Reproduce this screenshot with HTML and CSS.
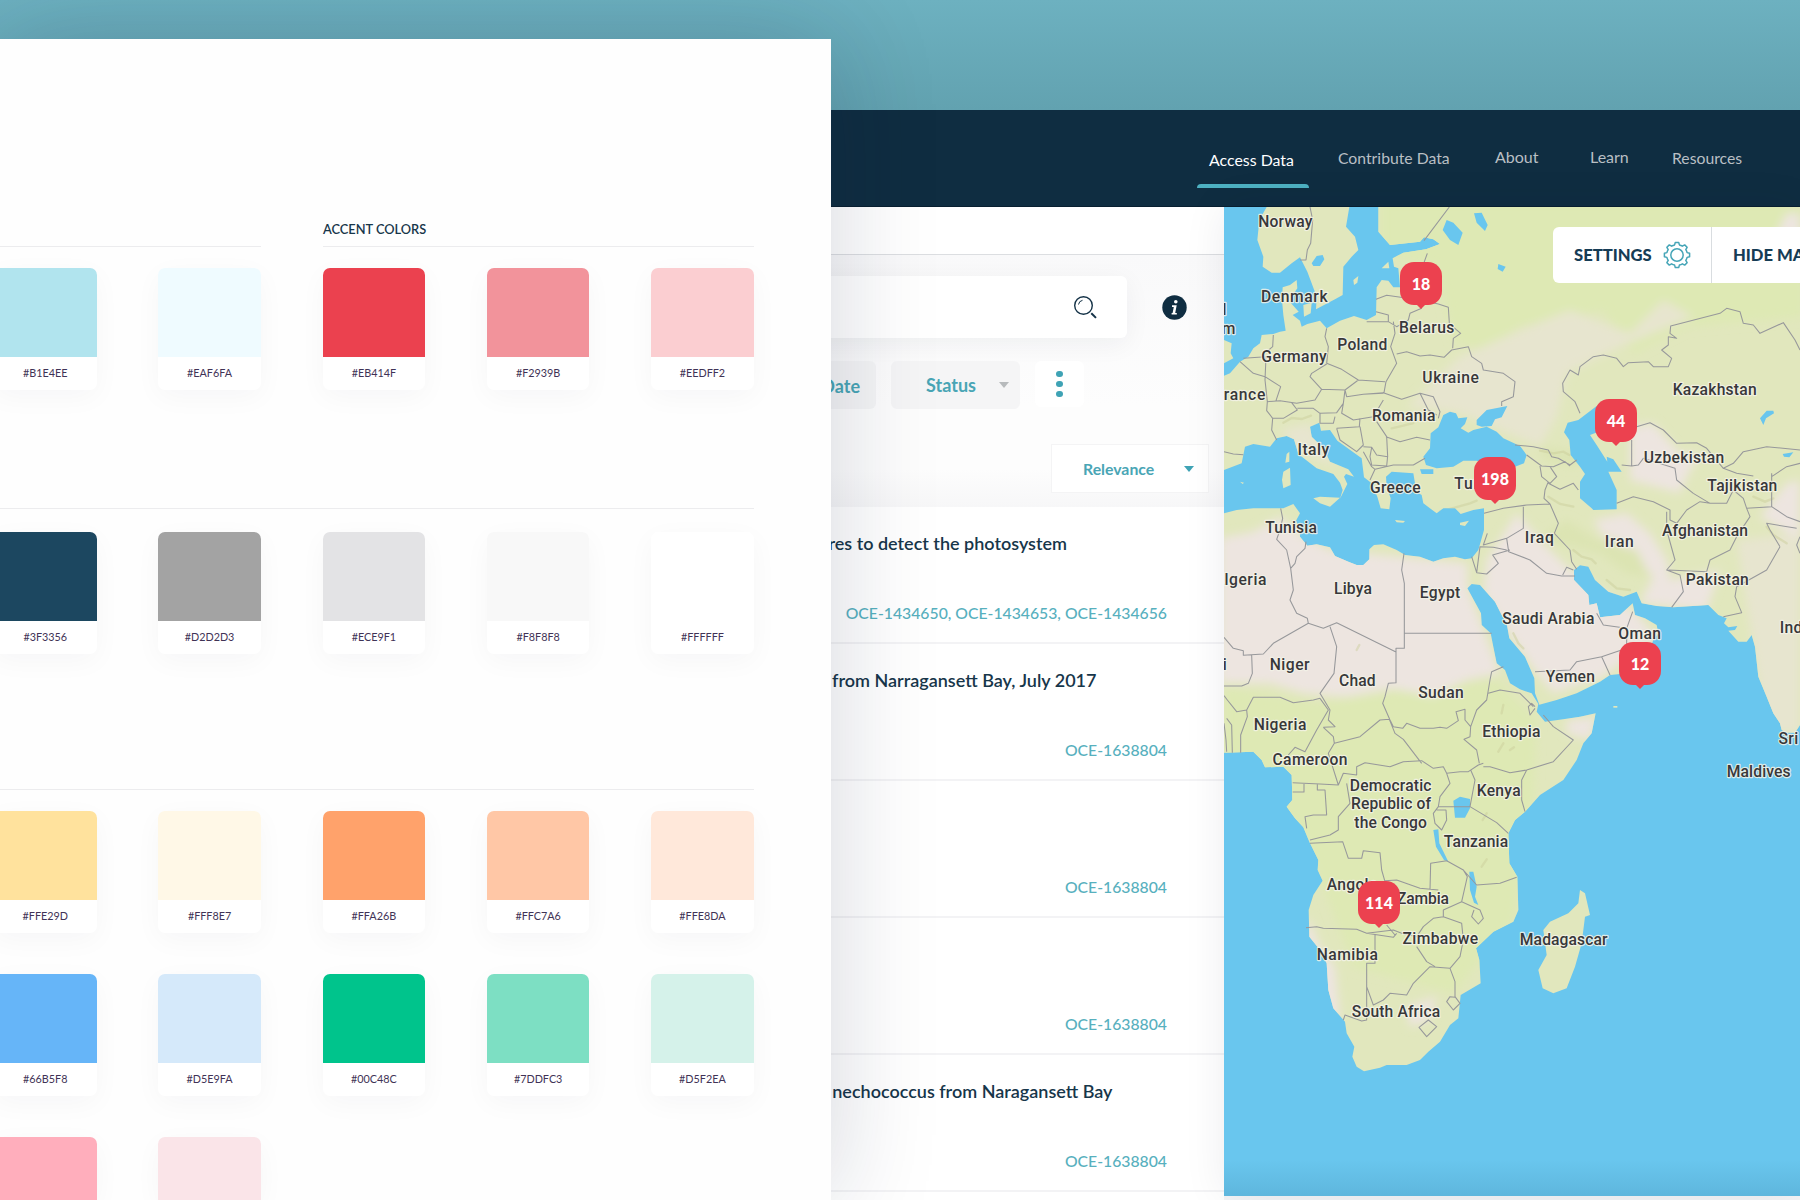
FILE: index.html
```html
<!DOCTYPE html>
<html lang="en">
<head>
<meta charset="utf-8">
<title>Access Data</title>
<link rel="stylesheet" href="styles.css">
</head>
<body>
<div class="app">
  <header class="topbar">
    <nav class="nav">
      <a class="nav-item active">Access Data</a>
      <a class="nav-item contribute">Contribute Data</a>
      <a class="nav-item about">About</a>
      <a class="nav-item learn">Learn</a>
      <a class="nav-item resources">Resources</a>
    </nav>
  </header>
  <main class="content">
    <section class="results">
      <div class="strip"></div>
      <div class="filters">
        <div class="search-row">
          <div class="search">
            <svg width="25" height="25" viewBox="0 0 25 25" fill="none" stroke="#143247"><circle cx="10.5" cy="10.5" r="8.8" stroke-width="1.4"/><path d="M5.5 9.5a5 5 0 0 1 4-4.2" stroke-width="1"/><path d="M18.3 18.3l4.7 4.6" stroke-width="2"/></svg>
          </div>
          <svg class="info" width="25" height="25" viewBox="0 0 25 25"><circle cx="12.5" cy="12.5" r="12.2" fill="#0f2d41"/><circle cx="13.8" cy="6.8" r="1.8" fill="#fff"/><path d="M10 10.3h4.7l-1.5 7.7h1.6v1.6H9.6V18h1l1.2-6.1H10z" fill="#fff"/></svg>
        </div>
        <div class="chips">
          <div class="chip date">Date</div>
          <div class="chip status">Status<i class="caret"></i></div>
          <div class="more"><i></i><i></i><i></i></div>
        </div>
        <div class="sort">Relevance<i class="caret"></i></div>
      </div>
      <ul class="list">
        <li><h3 class="t1">res to detect the photosystem</h3><p>OCE-1434650, OCE-1434653, OCE-1434656</p></li>
        <li><h3 class="t2">from Narragansett Bay, July 2017</h3><p>OCE-1638804</p></li>
        <li><h3></h3><p>OCE-1638804</p></li>
        <li><h3></h3><p>OCE-1638804</p></li>
        <li><h3 class="t3">nechococcus from Naragansett Bay</h3><p>OCE-1638804</p></li>
      </ul>
    </section>
    <section class="map">
      <svg class="map-art" viewBox="12 21 1728 2967" preserveAspectRatio="none">
        <defs>
          <path id="land" d="M475 21V95L510 135L600 125L612 112L640 118L660 132L618 148L550 158L518 175L522 200L535 205L540 262L520 262L505 242L485 240L470 262L468 345L440 360L402 348L360 362L320 385L300 362L262 372L245 380L240 362L218 345L236 335L212 308L218 285L232 265L230 240L210 255L188 262L186 300L190 345L197 392L180 395L160 402L125 405L120 430L100 445L85 470L60 485L30 520L12 527V810L65 790L75 740L100 732L150 740L170 715L200 708L222 718L235 762L290 805L340 822L360 848L368 870L360 896L382 852L372 830L378 822L402 830L385 808L330 785L310 745L275 710L270 680L298 668L303 692L330 690L352 722L425 775L432 832L455 850L472 890L482 925L508 928L512 895L500 860L498 830L515 815L580 820L585 850L580 870L605 885L610 910L650 940L670 925L705 925L722 942L760 930L792 925L792 990L775 1050L755 1075L735 1078L705 1070L670 1075L640 1085L600 1070L555 1065L530 1050L490 1033L462 1035L448 1048L448 1078L430 1095L410 1095L385 1085L345 1068L330 1042L290 1033L262 1037L240 1010L238 985L228 962L240 940L220 912L190 925L100 925L50 930L12 940V1658L100 1655L125 1680L135 1702L190 1700L215 1725L217 1800L200 1820L225 1855L250 1882L268 1925L295 1980L293 2010L308 2042L280 2085L266 2130L268 2210L300 2250L320 2290L325 2370L340 2425L375 2465L380 2500L403 2540L397 2570L410 2600L432 2614L480 2603L500 2595L560 2595L600 2580L625 2555L660 2525L690 2475L715 2455L722 2385L782 2350L778 2280L768 2245L820 2195L880 2165L895 2130L892 2030L868 1990L865 1900L885 1860L915 1835L960 1785L1030 1740L1070 1680L1090 1630L1115 1600L1127 1540L1080 1550L1040 1556L975 1565L950 1535L955 1512L935 1480L900 1468L870 1450L855 1410L830 1390L820 1340L812 1300L785 1275L783 1240L742 1165L755 1152L780 1155L825 1205L845 1245L860 1270L868 1315L915 1370L943 1435L945 1480L958 1514L1010 1500L1070 1480L1140 1445L1170 1425L1200 1422L1280 1370L1300 1320L1315 1300L1310 1275L1275 1255L1245 1245L1238 1210L1200 1245L1140 1252L1130 1210L1108 1215L1105 1185L1062 1140V1110L1080 1096L1105 1100L1125 1140L1165 1175L1210 1190L1250 1175L1265 1210L1310 1218L1360 1222L1465 1215L1495 1245L1520 1255L1512 1270L1525 1282L1552 1278L1545 1290L1525 1292L1555 1325L1580 1325L1595 1305L1605 1340L1615 1430L1640 1490L1660 1540L1680 1570L1685 1590L1700 1598L1725 1598L1740 1575V21Z"/>
          <clipPath id="land-clip"><use href="#land"/></clipPath>
          <filter id="soft" x="-20%" y="-20%" width="140%" height="140%"><feGaussianBlur stdDeviation="14"/></filter>
        </defs>
        <rect x="12" y="21" width="1728" height="2967" fill="#69c6ee"/>
        <g fill="#e1e7bd">
          <path d="M140 21L118 60L112 120L130 170L128 200L155 218L180 218L215 190L240 172L262 215L275 250L290 290L288 328L345 298L368 285L370 200L395 170L415 150L405 110L378 80L388 21Z"/>
          <path d="M250 315L275 308L272 340L252 350ZM400 240L415 228L412 248L402 255ZM485 205L505 185L508 205ZM200 762L208 755L208 785L196 788ZM190 815L210 803L212 855L190 865L186 840ZM280 895L300 890L360 893L330 920L300 910ZM525 960L555 963L550 968L530 967ZM720 968L747 962L735 978L720 975ZM12 420L35 430L32 460L40 475L12 490ZM60 845L72 848L68 852Z"/>
          <path d="M1080 2070L1095 2080L1110 2145L1095 2150L1085 2230L1065 2300L1040 2365L1000 2380L968 2365L955 2310L980 2265L970 2190L990 2165L1045 2140L1075 2110Z"/>
          <path d="M1180 1518h12v5h-12z"/>
        </g>
        <use href="#land" fill="#e1e7bd"/>
        <g clip-path="url(#land-clip)">
          <g filter="url(#soft)">
            <path fill="#dee9b4" d="M480 0H1750V350L1400 380L1240 460L1150 330L900 380L800 460L700 420L650 200L480 160ZM12 1460L300 1510L500 1480L830 1440L950 1560L940 1800L880 2160L700 2380L400 2300L250 1900L12 1700Z"/>
            <path fill="#e7e5cf" d="M720 470L900 390L1050 330L1230 400L1330 300L1420 350L1200 440L1040 520L1010 650L960 740L720 640L560 620ZM180 690L270 670L350 800L240 760ZM1550 1020L1740 1000V1600H1640Z"/>
            <path fill="#ede5e0" d="M0 1015L100 995L180 950L235 1000L330 1050L742 1090L742 1160L840 1420L740 1440L640 1490L520 1465L380 1490L250 1480L150 1450L0 1450ZM800 1080L890 940L970 1030L1040 1100L1250 1240L1310 1310L1150 1430L1000 1480L950 1420L860 1290L790 1180ZM1120 960L1220 940L1290 1000L1340 1080L1350 1140L1500 1110L1460 1230L1260 1210L1300 1130L1190 1020L1150 1010ZM1230 680L1300 670L1380 760L1440 760L1400 830L1380 880L1230 840ZM1700 850L1740 840V1020L1620 950ZM1040 1560L1130 1550L1110 1620L1040 1600ZM265 2150L300 2240L345 2300L360 2460H320L250 2220ZM560 2420L650 2390L630 2460L570 2480ZM1700 40H1740V120H1660Z"/>
            <path fill="#dce4b2" d="M960 1020L1040 960L1130 1020L1250 1050L1290 1130L1220 1120L1140 1060L1060 1040ZM950 740L1100 760L1060 800L980 780Z"/>
          </g>
          <g fill="none" stroke="#c9cc98" stroke-width="7" stroke-opacity=".45" stroke-linecap="round">
            <path d="M190 668l25-14 30 3 28-10M960 752l40 8 30-5 18 10M985 890l35 22 40 8M1060 1050l25 20 30 8 12 12M1160 1140l30 25 40 5M850 1515l-5 25M850 1630l-15 25M870 1650l12-8M515 685l35-8 30-8M660 935l90-25 20-8M1600 890l35 15 25-10M1640 980l20 25 40 25M880 1300l15 30 15 15M785 2000l15-22M1045 2310l12-60M410 1350l8-15M800 1840l-12 20"/>
          </g>
        </g>
        <path fill="#69c6ee" d="M690 635L708 640L715 655L742 652L735 672L722 685L745 698L760 690L800 680L830 695L850 715L900 738L920 765L912 790L885 800L800 790L770 782L730 782L700 800L650 805L618 795L610 770L630 745L632 700L655 682L670 645ZM770 660L800 630L862 618L845 652L825 658L815 678L785 680L770 675ZM600 808L640 808L640 822L605 822ZM275 190L290 168L308 165L313 178L300 198L280 198ZM668 90L680 60L700 68L728 98L715 135L690 120ZM762 40L785 38L803 75L795 93L770 68ZM835 192L857 200L848 215L833 207ZM1130 618L1075 660L1043 668L1032 697L1048 720L1052 765L1080 800L1095 822L1080 845L1080 895L1115 925L1120 930L1190 928V870L1165 815L1205 815L1180 778L1160 770L1162 785L1130 735L1110 705L1150 690V618ZM1620 655L1640 632L1660 632L1662 640L1638 655L1630 675ZM1688 762L1720 757L1708 772L1692 770ZM700 1802L720 1790L750 1797L750 1825L735 1853H705ZM640 1890L655 1888L658 1930L685 1985L672 1980L648 1940ZM748 2015L760 2015L770 2060L765 2090L775 2115L762 2108L750 2070ZM1340 205L1355 205L1352 217Z"/>
        <g class="borders">
          <path d="M270 21L278 60L272 130L262 150L258 180H240M688 21L612 122M622 160L612 188M468 298L500 286L600 300L655 312L685 322L688 370L708 388L722 400L700 415L698 445M468 335L505 345L505 365H440M505 365L530 380L565 360L570 340L605 325M520 365L525 400L512 440L530 490L498 545L492 578M320 385L315 410L325 440L320 490M530 462L560 455L600 468L630 465L672 472L695 450L745 440L755 470L785 490L790 510L850 520L885 545L880 590L845 605V618M320 490L365 508L415 540L495 545M320 492L275 520L270 530L305 568L285 600L230 610L180 602L142 605L135 540L138 470L70 475M160 405L158 440L140 455M60 485L100 520L135 530L182 560L168 602M142 605L140 632L158 655L155 690L170 720M158 655L190 655L232 630L215 608M232 625L280 625L300 640L350 638L370 610L375 570L305 568M415 540L375 570L380 590L430 583L490 578L545 598L600 580L640 590L660 635L655 655M600 580L625 630L650 645M430 583L490 580M370 610L365 640L400 660L460 650L490 600M300 640V670H340L345 650M350 685L418 680L420 655M350 685L360 720L410 755L430 735L420 680M470 665L500 710L503 770L470 765L455 742L430 740M498 710L540 725L590 712L630 720M455 742L450 770L455 795L500 798L503 768M430 755L455 800L465 808L450 840M465 808L520 795L580 795L615 775M12 755L40 762L70 764M182 925L188 955L180 990L170 1018L200 1050L212 1105L220 1170L210 1200L230 1240L262 1255L265 1270M258 1025L255 1045L230 1070L225 1090L212 1105M885 735L940 740L985 750L995 770L1015 775L1050 795L1070 780M920 765L965 798L1000 800L1035 785L1050 798M960 798L965 830L990 850L1010 830L990 800M985 850L1020 868L1060 850L1075 870M985 845L975 870L972 895L990 912M792 940L850 925L920 915L990 912L1015 970L1003 1000L1050 1050L1055 1085L1070 1108M910 920V985L860 1015L790 1035L802 1000M860 1015L866 1055L930 1080L980 1120L1025 1128L1065 1128M1028 1125L1040 1102L1060 1110M755 1070L770 1118L780 1040L820 1042L860 1050M770 1118L800 1122L835 1090L818 1065L870 1050M552 1060L545 1110L553 1150V1300H815M553 1300V1345H528V1448L505 1450L495 1490L488 1510L510 1560L520 1580L548 1585L560 1570L600 1585H640L660 1582L680 1585L715 1562L708 1535L735 1528L735 1560L752 1580M265 1270L310 1285L350 1268L528 1356M265 1270L160 1330L130 1362L70 1366V1352L40 1345L12 1312M330 1280L350 1340L342 1420L300 1480L330 1530L325 1560L345 1580L310 1582M95 1366L97 1420L85 1450L65 1458H12M300 1495L280 1500L220 1508L180 1492L100 1492L80 1530L50 1535L22 1500L12 1487M80 1530L82 1550L62 1605V1658M20 1555L35 1575L37 1658M12 1570L18 1620L20 1655M300 1495L325 1530L290 1590L255 1655L225 1642L205 1665M310 1582L340 1610L343 1630L325 1660L355 1755L300 1752L218 1748M343 1630L420 1610L480 1560L508 1558L525 1600L550 1618L605 1690M355 1755L370 1720L410 1725V1700L435 1688L510 1700L550 1685L605 1682L640 1705L670 1700L680 1720L720 1715L745 1715L775 1695L790 1690M752 1580L750 1610L732 1618L770 1650L778 1690M752 1580L770 1530L800 1500L810 1440L815 1415L850 1400M805 1480L840 1470L900 1480L940 1520M970 1545L1000 1580L1060 1620L1000 1685L920 1710L870 1718L810 1700L790 1700M920 1710L905 1740V1800L915 1835M680 1720L690 1750L660 1790L655 1820L640 1840L645 1870L665 1890L680 1860L678 1830L650 1830M655 1820H750L830 1868L865 1900M750 1820L765 1740L752 1710M218 1776H252V1752M292 1752V1770H315L320 1845L280 1845L255 1850L260 1885M380 1750L390 1810L355 1850V1890L330 1905L270 1920M270 1930L368 1925L385 1975L425 1975L430 1952L480 1958L485 2010L495 2045M495 2042L530 2040L600 2065L655 2070M630 2070L632 1990L680 1982L730 2010L770 2055L840 2050L890 2032M730 2010L742 2030L725 2105L670 2130V2150L725 2170L730 2220M725 2105L780 2130L790 2155L775 2172L755 2150L762 2130M258 2183L290 2180L310 2185L410 2188L440 2200L520 2190L545 2200L590 2210L610 2180L640 2155L670 2150M500 2175L525 2205M440 2200L520 2212L530 2200M465 2205V2290H440V2460L425 2463L375 2445L370 2460M440 2360L460 2415L490 2400L510 2380L560 2385L580 2350L630 2300L690 2305L720 2270L730 2220M590 2240L620 2285L645 2300M690 2305L705 2345V2390L720 2410L700 2430L680 2405L690 2390L705 2392M597 2482L625 2460L650 2480L620 2510Z"/>
          <path d="M1080 640L1065 605L1030 575L1028 550L1050 510L1075 525L1080 500L1120 470L1150 465L1190 475L1210 500L1225 488L1285 485L1300 500H1345L1355 475L1325 450L1345 435L1345 410L1370 415L1350 400L1352 378L1500 340L1520 325L1560 335L1570 370L1600 375L1620 400L1690 368L1725 420L1740 450M1250 680L1290 668L1330 690L1370 730L1430 728L1460 745L1510 805L1540 790L1570 755L1640 740L1740 750M1235 720V798L1205 795M1235 798L1255 795L1270 775L1365 805L1370 840L1420 880L1470 910L1520 910L1540 870L1570 895L1580 925L1655 920L1700 950L1740 965M1190 910L1240 890L1300 905L1350 930V960L1370 970L1400 930L1440 905L1470 910M1510 805L1550 820L1600 828M1655 820V920M1655 830L1700 800L1740 790M1340 935L1340 990L1365 1080L1340 1110L1380 1125L1390 1175L1355 1222M1345 1110L1460 1115L1470 1080L1530 1050L1550 1010L1590 950L1580 925M1680 1040L1650 990L1640 970L1730 985M1680 1040L1640 1110L1550 1160L1545 1190L1565 1238L1510 1250M1740 1060L1730 1035L1740 1010M1130 1240L1150 1275L1220 1285L1238 1235M1220 1285V1345L1145 1370L1170 1425M1145 1370L1070 1385L1050 1410L945 1415M945 1525L930 1545L925 1520L935 1510L945 1520"/>
        </g>
        <g class="names">
          <text x="196" y="82" textLength="163">Norway</text><text x="223" y="306" textLength="200">Denmark</text>
          <text x="-47" y="345" textLength="132">United</text><text x="-45" y="402" textLength="182">Kingdom</text>
          <text x="620" y="399" textLength="166">Belarus</text><text x="427" y="451" textLength="150">Poland</text>
          <text x="222" y="486" textLength="196">Germany</text><text x="692" y="549" textLength="170">Ukraine</text>
          <text x="60" y="599" textLength="152">France</text><text x="551" y="663" textLength="190">Romania</text>
          <text x="280" y="766" textLength="95">Italy</text><text x="526" y="878" textLength="152">Greece</text>
          <text x="780" y="866" textLength="155">Turkey</text><text x="213" y="1000" textLength="155">Tunisia</text>
          <text x="60" y="1155" textLength="158">Algeria</text><text x="399" y="1181" textLength="114">Libya</text>
          <text x="660" y="1194" textLength="122">Egypt</text><text x="-25" y="1410" textLength="90">Mali</text>
          <text x="209" y="1411" textLength="120">Niger</text><text x="412" y="1458" textLength="110">Chad</text>
          <text x="663" y="1494" textLength="137">Sudan</text><text x="180" y="1590" textLength="158">Nigeria</text>
          <text x="270" y="1694" textLength="225">Cameroon</text><text x="512" y="1772" textLength="245">Democratic</text>
          <text x="513" y="1828" textLength="240">Republic of</text><text x="512" y="1884" textLength="218">the Congo</text>
          <text x="874" y="1610" textLength="175">Ethiopia</text><text x="836" y="1789" textLength="132">Kenya</text>
          <text x="985" y="1271" textLength="276">Saudi Arabia</text><text x="1484" y="586" textLength="252">Kazakhstan</text>
          <text x="1392" y="788" textLength="241">Uzbekistan</text><text x="1567" y="872" textLength="210">Tajikistan</text>
          <text x="1455" y="1008" textLength="258">Afghanistan</text><text x="958" y="1029" textLength="87">Iraq</text>
          <text x="1198" y="1041" textLength="87">Iran</text><text x="1492" y="1154" textLength="189">Pakistan</text>
          <text x="1259" y="1318" textLength="128">Oman</text><text x="1051" y="1445" textLength="148">Yemen</text>
          <text x="1733" y="1299" textLength="108">India</text><text x="1777" y="1631" textLength="203">Sri Lanka</text>
          <text x="1616" y="1730" textLength="192">Maldives</text><text x="768" y="1940" textLength="193">Tanzania</text>
          <text x="396" y="2069" textLength="152">Angola</text><text x="609" y="2112" textLength="156">Zambia</text>
          <text x="661" y="2231" textLength="227">Zimbabwe</text><text x="1031" y="2236" textLength="263">Madagascar</text>
          <text x="382" y="2279" textLength="183">Namibia</text><text x="528" y="2452" textLength="265">South Africa</text>
        </g>
      </svg>
      <span class="pin" style="left:176px;top:55px">18</span>
      <span class="pin" style="left:371px;top:192px">44</span>
      <span class="pin" style="left:250px;top:250px">198</span>
      <span class="pin" style="left:395px;top:435px">12</span>
      <span class="pin" style="left:134px;top:674px">114</span>
      <div class="map-tools">
        <div class="tool settings">SETTINGS
          <svg width="28" height="28" viewBox="-14 -14 28 28" fill="none" stroke="#45a5b7" stroke-width="1.5" stroke-linejoin="round"><circle r="6.2"/><path d="M-2.4-10.1L-1.7-12.6H1.7L2.4-10.1A10 10 0 0 1 5.4-8.8L7.7-10.1L10.1-7.7L8.8-5.4A10 10 0 0 1 10.1-2.4L12.6-1.7V1.7L10.1 2.4A10 10 0 0 1 8.8 5.4L10.1 7.7L7.7 10.1L5.4 8.8A10 10 0 0 1 2.4 10.1L1.7 12.6H-1.7L-2.4 10.1A10 10 0 0 1-5.4 8.8L-7.7 10.1L-10.1 7.7L-8.8 5.4A10 10 0 0 1-10.1 2.4L-12.6 1.7V-1.7L-10.1-2.4A10 10 0 0 1-8.8-5.4L-10.1-7.7L-7.7-10.1L-5.4-8.8A10 10 0 0 1-2.4-10.1Z"/></svg>
        </div>
        <div class="tool hide">HIDE MAP</div>
      </div>
    </section>
  </main>
</div>
<aside class="palette">
  <div class="heads"><h2></h2><h2>ACCENT COLORS</h2></div>
  <div class="swatches first">
    <figure><i style="background:#b1e4ee"></i><figcaption>#B1E4EE</figcaption></figure>
    <figure><i style="background:#effbff"></i><figcaption>#EAF6FA</figcaption></figure>
    <figure><i style="background:#eb414f"></i><figcaption>#EB414F</figcaption></figure>
    <figure><i style="background:#f2939b"></i><figcaption>#F2939B</figcaption></figure>
    <figure><i style="background:#fbced1"></i><figcaption>#EEDFF2</figcaption></figure>
  </div>
  <hr class="rule-two">
  <div class="swatches second">
    <figure><i style="background:#1c4760"></i><figcaption>#3F3356</figcaption></figure>
    <figure><i style="background:#a3a3a3"></i><figcaption>#D2D2D3</figcaption></figure>
    <figure><i style="background:#e3e3e5"></i><figcaption>#ECE9F1</figcaption></figure>
    <figure><i style="background:#f8f8f8"></i><figcaption>#F8F8F8</figcaption></figure>
    <figure><i style="background:#fff"></i><figcaption>#FFFFFF</figcaption></figure>
  </div>
  <hr class="rule-three">
  <div class="swatches third">
    <figure><i style="background:#ffe29d"></i><figcaption>#FFE29D</figcaption></figure>
    <figure><i style="background:#fff8e7"></i><figcaption>#FFF8E7</figcaption></figure>
    <figure><i style="background:#ffa26b"></i><figcaption>#FFA26B</figcaption></figure>
    <figure><i style="background:#ffc7a6"></i><figcaption>#FFC7A6</figcaption></figure>
    <figure><i style="background:#ffe8da"></i><figcaption>#FFE8DA</figcaption></figure>
    <figure><i style="background:#66b5f8"></i><figcaption>#66B5F8</figcaption></figure>
    <figure><i style="background:#d5e9fa"></i><figcaption>#D5E9FA</figcaption></figure>
    <figure><i style="background:#00c48c"></i><figcaption>#00C48C</figcaption></figure>
    <figure><i style="background:#7ddfc3"></i><figcaption>#7DDFC3</figcaption></figure>
    <figure><i style="background:#d5f2ea"></i><figcaption>#D5F2EA</figcaption></figure>
    <figure class="cut"><i style="background:#ffaebc"></i></figure>
    <figure class="cut"><i style="background:#fae4e8"></i></figure>
  </div>
</aside>
</body>
</html>
```
FILE: styles.css
```css
* { box-sizing: border-box; }
html { height: 1200px; overflow: hidden; }
body {
  margin: 0;
  width: 1800px;
  height: 1200px;
  padding-top: 110px;
  overflow: hidden;
  position: relative;
  font-family: Lato, "Liberation Sans", sans-serif;
  background: linear-gradient(#6db1c0, #62a2b0 110px);
}
h2, h3, p, ul, figure { margin: 0; padding: 0; }
ul { list-style: none; }

.app { height: 1090px; background: #f4f5f7; display: flex; flex-direction: column; overflow: hidden; }
.topbar { flex: none; height: 97px; background: #0f2d41; border-bottom: 1px solid #081f30; padding-left: 1197px; }
.nav { display: flex; align-items: flex-start; }
.nav-item { color: #b9bfc4; font-size: 16px; line-height: 20px; margin-top: 37px; white-space: nowrap; }
.nav-item.active { color: #fff; width: 112px; height: 78px; margin-top: 0; padding: 40px 3px 0 0; text-align: center; position: relative; font-size: 15.9px; }
.nav-item.active::after { content: ""; position: absolute; left: 0; right: 0; bottom: 0; height: 4px; border-radius: 4px 4px 0 0; background: #4db1c2; }
.contribute { margin-left: 29px; margin-top: 38px; width: 157px; font-size: 15.75px; }
.about { width: 95px; }
.learn { width: 82px; }
.resources { margin-top: 38px; font-size: 15.75px; }

.content { flex: 1; min-height: 0; display: flex; }
.results { width: 1224px; flex: none; background: #fff; display: flex; flex-direction: column; overflow: hidden; }
.strip { flex: none; height: 48px; border-bottom: 1px solid #dcdee1; }
.filters { flex: none; height: 252px; background: linear-gradient(#f9f9fa, #fdfdfd 60%, #fdfdfd 85%, #f7f7f8); padding: 21px 0 0; }
.search-row { display: flex; align-items: center; gap: 36px; }
.search { width: 1127px; height: 62px; border-radius: 6px; background: #fff; box-shadow: 0 6px 26px rgba(20, 30, 50, .055); display: flex; align-items: center; justify-content: flex-end; padding-right: 29px; }
.info { margin: 1px 0 0 -1px; }
.chips { display: flex; gap: 15px; margin-top: 23px; }
.chip { height: 48px; border-radius: 6px; background: #f5f5f6; color: #49a5b5; font-weight: 700; font-size: 18px; line-height: 50px; }
.date { width: 876px; text-align: right; padding-right: 16px; }
.status { width: 129px; padding-left: 35px; display: flex; align-items: center; gap: 23px; }
.caret { border: 5px solid transparent; border-top: 6px solid #b7babc; border-bottom: 0; }
.more { width: 49px; height: 46px; border-radius: 6px; background: #fff; display: flex; flex-direction: column; align-items: center; justify-content: center; gap: 3.4px; }
.more i { width: 6.4px; height: 6.4px; border-radius: 50%; background: #3fa3b5; }
.sort { margin: 35px 0 0 1051px; width: 158px; height: 49px; background: #fff; border: 1px solid #f4f4f5; color: #49a5b5; font-weight: 700; font-size: 15.8px; display: flex; align-items: center; padding-left: 31px; gap: 30px; }
.sort .caret { border-width: 6px 5px 0; border-top-color: #3fa3b5; }

.list li { height: 137.1px; border-bottom: 2px solid #f3f3f5; display: flex; flex-direction: column; }
.list h3 { height: 90px; padding-top: 24px; font-size: 18px; line-height: 24px; font-weight: 600; color: #17364a; text-align: right; white-space: nowrap; }
.list .t1 { width: 1067px; }
.list .t2 { width: 1096.5px; }
.list .t3 { width: 1112.5px; }
.list p { padding-right: 57px; text-align: right; font-size: 15.75px; line-height: 31px; font-weight: 500; color: #57b0be; }

.map { flex: none; width: 576px; height: 989px; position: relative; overflow: hidden; box-shadow: 0 0 40px rgba(20, 30, 50, .08); }
.map-art { display: block; width: 576px; height: 989px; }
.borders { fill: none; stroke: #97989b; stroke-width: 3.2; stroke-linejoin: round; }
.names { font: 500 47px Roboto, "Liberation Sans", sans-serif; fill: #38383a; text-anchor: middle; stroke: #f4f3e8; stroke-width: 7; stroke-opacity: .85; stroke-linejoin: round; paint-order: stroke; }
.map::after { content: ""; position: absolute; left: 0; right: 0; bottom: 0; height: 36px; background: linear-gradient(rgba(40, 100, 130, 0), rgba(40, 100, 130, .16)); }
.pin { position: absolute; width: 42px; height: 43px; border-radius: 14px; background: #ec414f; color: #fff; font-weight: 900; font-size: 16px; line-height: 43px; text-align: center; }
.pin::after { content: ""; position: absolute; left: 16px; top: 42px; border: 5px solid transparent; border-top-color: #ec414f; border-bottom: 0; }
.map-tools { position: absolute; left: 329px; top: 20px; width: 300px; height: 56px; border-radius: 6px; background: #fff; display: flex; color: #163c55; font-weight: 900; font-size: 16.6px; }
.tool { display: flex; align-items: center; white-space: nowrap; }
.settings { width: 159px; padding-left: 21px; gap: 11px; border-right: 1px solid #d9dde0; }
.hide { padding-left: 21px; }

.palette { position: absolute; left: 0; top: 39px; width: 831px; height: 1161px; background: #fefefe; box-shadow: 0 0 100px rgba(15, 30, 60, .18); overflow: hidden; clip-path: inset(-110px -130px 0 0); }
.heads { display: flex; gap: 62px; padding-top: 181px; }
.heads h2 { height: 27px; width: 431px; border-bottom: 1px solid #ececee; font-size: 12.8px; line-height: 18px; font-weight: 600; color: #17364a; }
.heads h2:first-child { width: 261px; }
.swatches { display: grid; grid-template-columns: repeat(5, 102.5px); column-gap: 61.8px; row-gap: 41px; margin-left: -6px; }
.first { margin-top: 21px; }
.second { margin-top: 23px; }
.third { margin-top: 21px; }
.palette hr { width: 754px; height: 1px; margin: 0; border: 0; background: #ececee; }
.palette .rule-two { margin-top: 118px; }
.palette .rule-three { margin-top: 135px; }
.swatches figure { height: 122px; border-radius: 7px; background: #fff; overflow: hidden; box-shadow: 0 7px 28px rgba(30, 30, 50, .035); }
.swatches .cut { height: 64px; border-radius: 7px 7px 0 0; }
.swatches i { display: block; height: 89px; }
.swatches figcaption { font-size: 10.8px; line-height: 32px; text-align: center; color: #3f3356; }
```
